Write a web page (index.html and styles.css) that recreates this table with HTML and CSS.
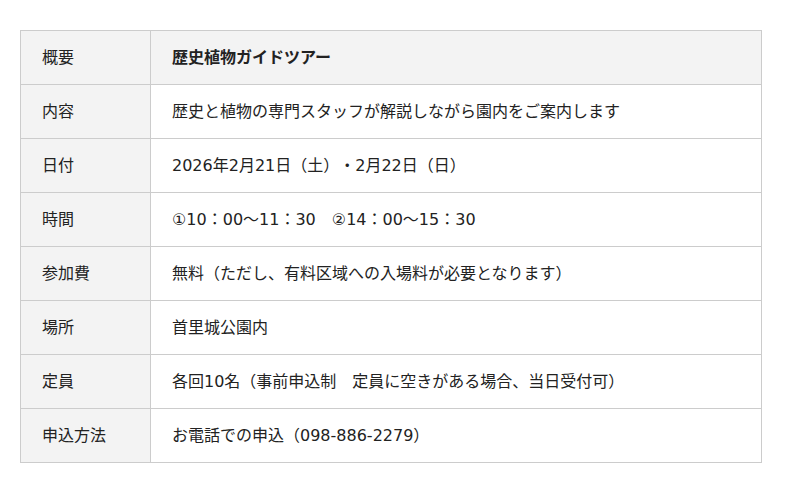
FILE: index.html
```html
<!DOCTYPE html>
<html lang="ja">
<head>
<meta charset="utf-8">
<link rel="stylesheet" href="styles.css">
</head>
<body>
<table class="info">
  <tr><th>概要</th><td class="title">歴史植物ガイドツアー</td></tr>
  <tr><th>内容</th><td>歴史と植物の専門スタッフが解説しながら園内をご案内します</td></tr>
  <tr><th>日付</th><td>2026年2月21日（土）・2月22日（日）</td></tr>
  <tr><th>時間</th><td>①10：00〜11：30　②14：00〜15：30</td></tr>
  <tr><th>参加費</th><td>無料（ただし、有料区域への入場料が必要となります）</td></tr>
  <tr><th>場所</th><td>首里城公園内</td></tr>
  <tr><th>定員</th><td>各回10名（事前申込制　定員に空きがある場合、当日受付可）</td></tr>
  <tr><th>申込方法</th><td>お電話での申込（098-886-2279）</td></tr>
</table>
</body>
</html>
```
FILE: styles.css
```css
html, body {
  margin: 0;
  padding: 0;
  background: #fff;
}
body {
  padding: 30px 38px 0 20px;
  font-family: "DejaVu Sans", "Noto Sans CJK JP", sans-serif;
  font-size: 16px;
  color: #222;
  text-spacing-trim: space-all;
}
.info {
  width: 742px;
  border-collapse: collapse;
}
.info th, .info td {
  border: 1px solid #ccc;
  height: 54px;
  padding: 0 21px;
  text-align: left;
  vertical-align: middle;
  font-weight: normal;
  line-height: 24px;
  box-sizing: border-box;
}
.info th {
  width: 130px;
  background: #f3f3f3;
}
.info td.title {
  background: #f3f3f3;
  font-weight: bold;
}
```
